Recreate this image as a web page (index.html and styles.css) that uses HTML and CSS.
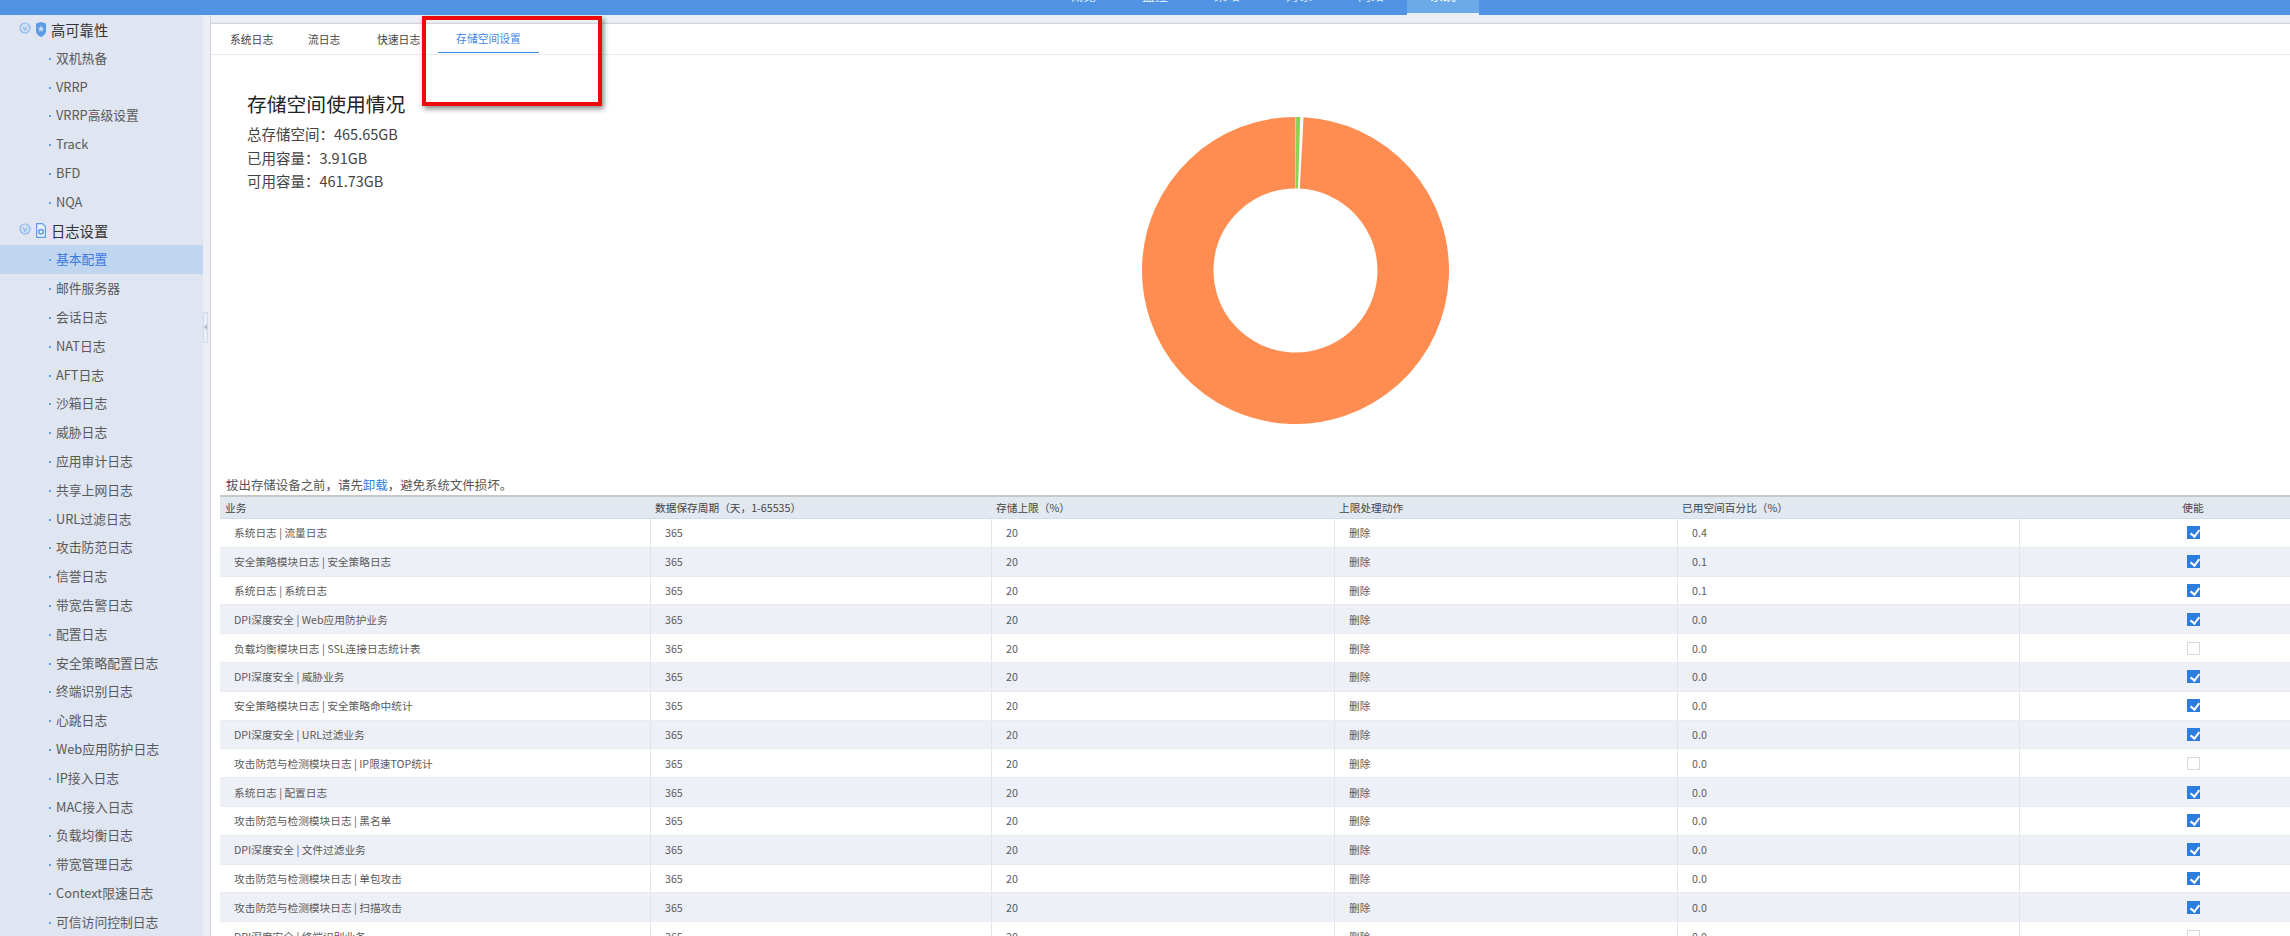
FILE: index.html
```html
<!DOCTYPE html>
<html lang="zh-CN">
<head>
<meta charset="utf-8">
<title>存储空间设置</title>
<link rel="stylesheet" href="styles.css">
</head>
<body>
<div class="app">
  <header class="topbar">
    <span class="nav-item">概览</span>
    <span class="nav-item">监控</span>
    <span class="nav-item">策略</span>
    <span class="nav-item">对象</span>
    <span class="nav-item">网络</span>
    <span class="nav-item active">系统</span>
  </header>
  <div class="body">
    <nav class="sidebar">
      <div class="group">
        <svg class="toggle" viewBox="0 0 12 12"><circle cx="6" cy="6" r="5" fill="#d3e0f3" stroke="#8db8ea" stroke-width="1.2"/><path d="M3.6 4.6 6 7l2.4-2.4M4.4 7 6 8.6 7.6 7" fill="none" stroke="#7fb0e8" stroke-width="1"/></svg>
        <svg class="gicon" viewBox="0 0 10 15"><path d="M5 0 10 1.6V9c0 3-2.5 4.800-5 6-2.500-1.200-5-3-5-6V1.600z" fill="#5e9de6"/><path d="M5 3.600 6 5.800l2 .2-1.500 1.500.4 2.200L5 8.600 3.100 9.700l.4-2.200L2 6l2-.2z" fill="#cfe0f6"/></svg>
        <span>高可靠性</span>
      </div>
      <div class="item">双机热备</div>
      <div class="item">VRRP</div>
      <div class="item">VRRP高级设置</div>
      <div class="item">Track</div>
      <div class="item">BFD</div>
      <div class="item">NQA</div>
      <div class="group">
        <svg class="toggle" viewBox="0 0 12 12"><circle cx="6" cy="6" r="5" fill="#d3e0f3" stroke="#8db8ea" stroke-width="1.2"/><path d="M3.6 4.6 6 7l2.400-2.400M4.400 7 6 8.600 7.600 7" fill="none" stroke="#7fb0e8" stroke-width="1"/></svg>
        <svg class="gicon" viewBox="0 0 10 15"><path d="M.6.600H6.500L9.400 3.500V14.400H.6z" fill="#eaf1fa" stroke="#5e9de6" stroke-width="1.200"/><circle cx="5" cy="8.800" r="2.300" fill="none" stroke="#5e9de6" stroke-width="1.500"/></svg>
        <span>日志设置</span>
      </div>
      <div class="item selected">基本配置</div>
      <div class="item">邮件服务器</div>
      <div class="item">会话日志</div>
      <div class="item">NAT日志</div>
      <div class="item">AFT日志</div>
      <div class="item">沙箱日志</div>
      <div class="item">威胁日志</div>
      <div class="item">应用审计日志</div>
      <div class="item">共享上网日志</div>
      <div class="item">URL过滤日志</div>
      <div class="item">攻击防范日志</div>
      <div class="item">信誉日志</div>
      <div class="item">带宽告警日志</div>
      <div class="item">配置日志</div>
      <div class="item">安全策略配置日志</div>
      <div class="item">终端识别日志</div>
      <div class="item">心跳日志</div>
      <div class="item">Web应用防护日志</div>
      <div class="item">IP接入日志</div>
      <div class="item">MAC接入日志</div>
      <div class="item">负载均衡日志</div>
      <div class="item">带宽管理日志</div>
      <div class="item">Context限速日志</div>
      <div class="item">可信访问控制日志</div>
    </nav>
    <div class="splitter"><div class="handle"><i class="arrow"></i></div></div>
    <main class="card">
      <div class="tabs">
        <span class="tab t1">系统日志</span>
        <span class="tab t2">流日志</span>
        <span class="tab t3">快速日志</span>
        <span class="tab t4 active">存储空间设置</span>
      </div>
      <section class="overview">
        <div class="info">
          <h1 class="title">存储空间使用情况</h1>
          <p class="stat s1">总存储空间：465.65GB</p>
          <p class="stat s2">已用容量：3.91GB</p>
          <p class="stat s3">可用容量：461.73GB</p>
        </div>
        <svg class="donut" viewBox="0 0 307 307" width="307" height="307">
          <circle cx="153.500" cy="153.500" r="117.750" fill="none" stroke="#ff8c50" stroke-width="71.500" pathLength="360" stroke-dasharray="357 3" transform="rotate(-87 153.500 153.500)"/>
          <circle cx="153.500" cy="153.500" r="117.750" fill="none" stroke="#8fd14f" stroke-width="71.500" pathLength="360" stroke-dasharray="1.600 358.400" transform="rotate(-89.800 153.500 153.500)"/>
        </svg>
      </section>
      <p class="notice">拔出存储设备之前，请先<a class="link">卸载</a>，避免系统文件损坏。</p>
      <div class="table">
        <div class="row head"><div>业务</div><div>数据保存周期（天，1-65535）</div><div>存储上限（%）</div><div>上限处理动作</div><div>已用空间百分比（%）</div><div class="center">使能</div></div>
        <div class="row"><div>系统日志 | 流量日志</div><div>365</div><div>20</div><div>删除</div><div>0.4</div><div class="center"><span class="check on"></span></div></div>
        <div class="row"><div>安全策略模块日志 | 安全策略日志</div><div>365</div><div>20</div><div>删除</div><div>0.1</div><div class="center"><span class="check on"></span></div></div>
        <div class="row"><div>系统日志 | 系统日志</div><div>365</div><div>20</div><div>删除</div><div>0.1</div><div class="center"><span class="check on"></span></div></div>
        <div class="row"><div>DPI深度安全 | Web应用防护业务</div><div>365</div><div>20</div><div>删除</div><div>0.0</div><div class="center"><span class="check on"></span></div></div>
        <div class="row"><div>负载均衡模块日志 | SSL连接日志统计表</div><div>365</div><div>20</div><div>删除</div><div>0.0</div><div class="center"><span class="check"></span></div></div>
        <div class="row"><div>DPI深度安全 | 威胁业务</div><div>365</div><div>20</div><div>删除</div><div>0.0</div><div class="center"><span class="check on"></span></div></div>
        <div class="row"><div>安全策略模块日志 | 安全策略命中统计</div><div>365</div><div>20</div><div>删除</div><div>0.0</div><div class="center"><span class="check on"></span></div></div>
        <div class="row"><div>DPI深度安全 | URL过滤业务</div><div>365</div><div>20</div><div>删除</div><div>0.0</div><div class="center"><span class="check on"></span></div></div>
        <div class="row"><div>攻击防范与检测模块日志 | IP限速TOP统计</div><div>365</div><div>20</div><div>删除</div><div>0.0</div><div class="center"><span class="check"></span></div></div>
        <div class="row"><div>系统日志 | 配置日志</div><div>365</div><div>20</div><div>删除</div><div>0.0</div><div class="center"><span class="check on"></span></div></div>
        <div class="row"><div>攻击防范与检测模块日志 | 黑名单</div><div>365</div><div>20</div><div>删除</div><div>0.0</div><div class="center"><span class="check on"></span></div></div>
        <div class="row"><div>DPI深度安全 | 文件过滤业务</div><div>365</div><div>20</div><div>删除</div><div>0.0</div><div class="center"><span class="check on"></span></div></div>
        <div class="row"><div>攻击防范与检测模块日志 | 单包攻击</div><div>365</div><div>20</div><div>删除</div><div>0.0</div><div class="center"><span class="check on"></span></div></div>
        <div class="row"><div>攻击防范与检测模块日志 | 扫描攻击</div><div>365</div><div>20</div><div>删除</div><div>0.0</div><div class="center"><span class="check on"></span></div></div>
        <div class="row"><div>DPI深度安全 | 终端识别业务</div><div>365</div><div>20</div><div>删除</div><div>0.0</div><div class="center"><span class="check"></span></div></div>
      </div>
    </main>
  </div>
  <div class="annotation"></div>
</div>
</body>
</html>
```
FILE: styles.css
```css
* { box-sizing: border-box; }
html, body { margin: 0; padding: 0; height: 100%; overflow: hidden; }
body { font-family: "Noto Sans CJK SC", "Noto Sans", sans-serif; color: #555; background: #eceef5; }
.app { position: relative; width: 2290px; height: 936px; overflow: hidden; display: flex; flex-direction: column; }

/* top navigation: only the bottom edge of the labels is on screen */
.topbar { flex: 0 0 15px; height: 15px; background: #4f93e2; display: flex; align-items: flex-end; padding-left: 1047px; overflow: hidden; }
.nav-item { flex: 0 0 72px; width: 72px; height: 15px; padding-bottom: 14px; display: flex; align-items: flex-end; justify-content: center; font-size: 13px; line-height: 13px; color: #dbe9fa; }
.nav-item.active { background: #6ca9e8; color: #fff; border-bottom: 2px solid #e8effa; padding-bottom: 12px; }

.body { flex: 1; display: flex; min-height: 0; }

/* sidebar */
.sidebar { flex: 0 0 203px; width: 203px; background: #dfe5f1; overflow: hidden; }
.group { height: 28.8px; display: flex; align-items: center; padding-left: 19px; font-size: 14.3px; color: #333; }
.toggle { width: 12px; height: 12px; margin-right: 5px; margin-top: -3px; }
.gicon { width: 10px; height: 15px; margin-right: 5px; }
.item { position: relative; height: 28.8px; line-height: 28.8px; padding-left: 56px; font-size: 12.8px; color: #5a5a5a; white-space: nowrap; }
.item::before { content: ""; position: absolute; left: 49px; top: 14px; width: 2px; height: 2px; background: #5e9de6; }
.item.selected { background: #c0d5ee; color: #3b78dc; }

/* splitter */
.splitter { flex: 0 0 8px; width: 8px; display: flex; align-items: center; padding-bottom: 297px; border-right: 1px solid #cfd1d8; }
.handle { width: 5px; height: 31px; border: 1px solid #d3d9e8; background: #eceef5; display: flex; align-items: center; justify-content: center; }
.arrow { width: 0; height: 0; border-style: solid; border-width: 3px 3px 3px 0; border-color: transparent #b4b8c2 transparent transparent; }

/* main card */
.card { flex: 1; min-width: 0; margin-top: 9px; background: #fff; overflow: hidden; box-shadow: 0 -1px 1px #d2d4da; }
.tabs { height: 31px; border-bottom: 1px solid #e8eaef; display: flex; font-size: 10.8px; color: #444; }
.tab { display: flex; align-items: center; height: 29px; white-space: nowrap; }
.t1 { margin-left: 19px; width: 78px; }
.t2 { width: 69px; }
.t3 { width: 61px; }
.t4 { width: 101px; justify-content: center; }
.tab.active { color: #3f86e4; border-bottom: 1px solid #3f86e4; }

.overview { height: 421px; display: flex; padding-left: 36px; }
.info { flex: 0 0 895px; width: 895px; padding-top: 35px; }
.title { margin: 0; font-size: 19.800px; font-weight: 400; line-height: 28px; color: #222; }
.stat { margin: 0; font-size: 14.500px; line-height: 23.600px; color: #444; white-space: nowrap; }
.s1 { margin-top: 4px; }
.donut { flex: none; margin-top: 62px; }

.notice { margin: 0; height: 19px; line-height: 19px; padding-left: 15px; font-size: 12.450px; color: #555; white-space: nowrap; }
.link { color: #2f7de1; }

/* table */
.table { margin-left: 9px; width: 2147px; font-size: 10.700px; color: #5a5a5a; }
.row { display: grid; grid-template-columns: 430px 341px 343px 343px 342px 348px; height: 28.800px; border-bottom: 1px solid #e9ebf0; white-space: nowrap; }
.row:nth-child(odd) { background: #edf0f7; }
.row > div { display: flex; align-items: center; padding-left: 14px; border-left: 1px solid #e4e5e9; }
.row > div:first-child { border-left: 0; }
.row > .center { justify-content: center; padding-left: 0; }
.row.head { height: 24px; background: #e2e8f0; border-top: 2px solid #c8c8c8; border-bottom: 1px solid #d4dcef; color: #444; }
.row.head > div { padding-left: 5px; border-left: 0; }
.row.head > .center { padding-left: 0; }
.check { position: relative; display: block; width: 13px; height: 13px; border: 1px solid #d8d8d8; background: #fff; }
.check.on { border-color: #2b7de0; background: #2b7de0; }
.check.on::after { content: ""; position: absolute; left: 3.500px; top: 1px; width: 4px; height: 7px; border: solid #fff; border-width: 0 2px 2px 0; transform: rotate(38deg); }

/* red annotation drawn on the screenshot */
.annotation { position: absolute; left: 422px; top: 16px; width: 180px; height: 90px; border: 4px solid #ee0a0a; box-shadow: 2px 3px 5px rgba(0, 0, 0, .45); }
```
